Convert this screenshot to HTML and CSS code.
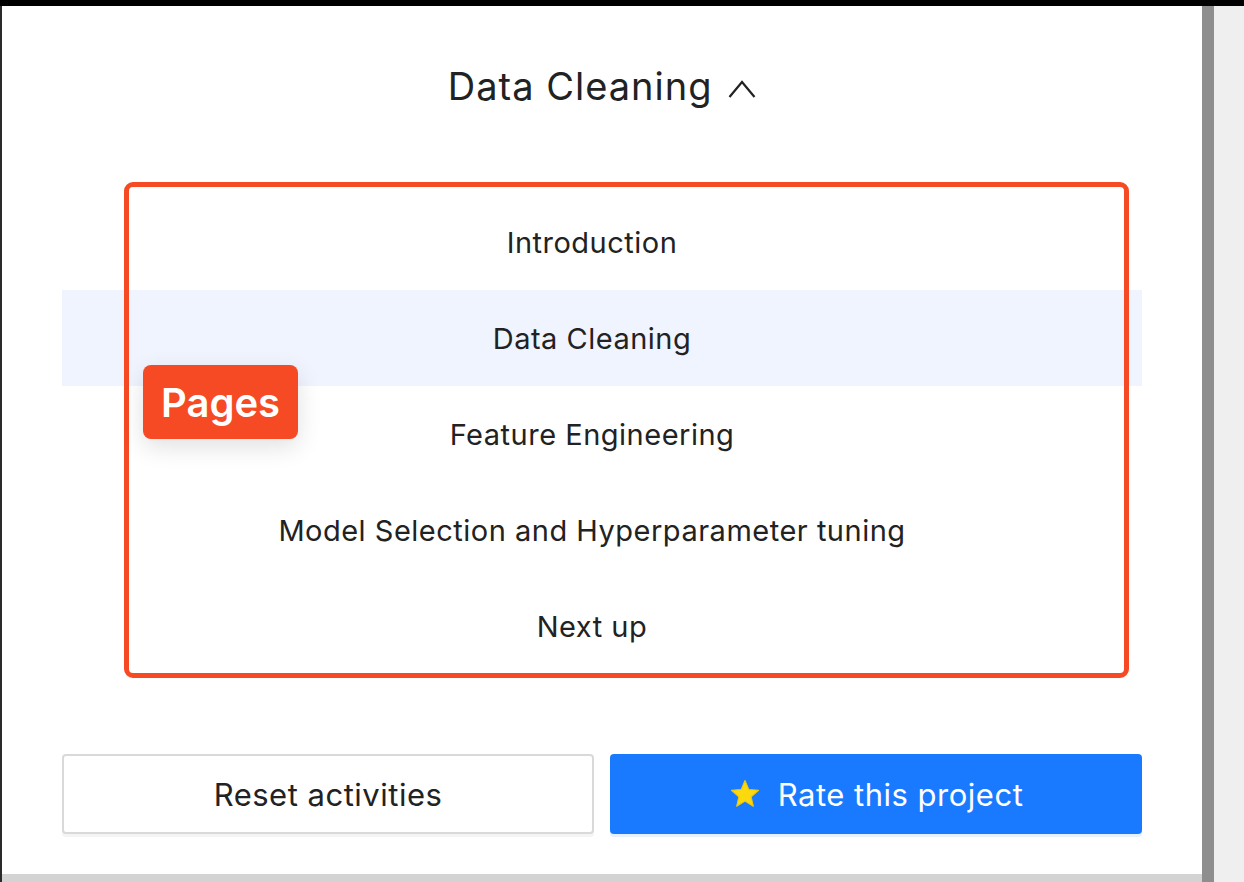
FILE: index.html
```html
<!DOCTYPE html>
<html>
<head>
<meta charset="utf-8">
<link rel="stylesheet" href="styles.css">
</head>
<body>
<div class="topbar"></div>
<div class="frame">
  <div class="panel">
    <div class="content">
      <h1 class="title">Data Cleaning
        <svg class="chev" width="28" height="20" viewBox="0 0 28 20"><path d="M1.5 18 L14 3 L26.5 18" fill="none" stroke="#222" stroke-width="2.2"/></svg>
      </h1>
      <div class="list-wrap">
        <ul class="pages">
          <li>Introduction</li>
          <li class="active">Data Cleaning</li>
          <li>Feature Engineering</li>
          <li>Model Selection and Hyperparameter tuning</li>
          <li>Next up</li>
        </ul>
        <div class="highlight-box"></div>
        <div class="badge">Pages</div>
      </div>
      <div class="actions">
        <button class="btn btn-ghost">Reset activities</button>
        <button class="btn btn-primary">
          <svg class="star" width="32" height="30" viewBox="0 0 24 23"><path d="M12 1.2 L14.9 8.1 L22.4 8.7 L16.7 13.6 L18.4 20.9 L12 17 L5.6 20.9 L7.3 13.6 L1.6 8.7 L9.1 8.1 Z" fill="#fbd90f" stroke="#f3c800" stroke-width="0.8" stroke-linejoin="round"/></svg>
          <span>Rate this project</span>
        </button>
      </div>
    </div>
    <div class="hscroll"></div>
  </div>
  <div class="vscroll"></div>
</div>
</body>
</html>
```

FILE: styles.css
```css
* { box-sizing: border-box; }
html, body { margin: 0; padding: 0; }
body {
  background: #efefef;
  font-family: Inter, "Noto Sans", "Liberation Sans", sans-serif;
  color: #222;
  width: 1244px;
  height: 882px;
  overflow: hidden;
}
.topbar { height: 6px; background: #000; }
.frame { display: flex; height: 876px; }
.panel {
  width: 1202px;
  background: #fff;
  border-left: 2px solid #2a2a2a;
  display: flex;
  flex-direction: column;
}
.content {
  flex: 1;
  padding: 58px 60px 0 60px;
}
.vscroll { width: 12px; background: #8e8e8e; }
.hscroll { height: 8px; background: #d3d3d3; }
.title {
  margin: 0 0 86px 0;
  height: 44px;
  line-height: 44px;
  font-size: 38px;
  letter-spacing: 1px;
  font-weight: 400;
  text-align: center;
  color: #222;
}
.chev { vertical-align: 1px; margin-left: 4px; }
.list-wrap { position: relative; }
.pages { list-style: none; margin: 0; padding: 0; }
.pages li {
  height: 96px;
  display: flex;
  align-items: center;
  justify-content: center;
  padding-right: 20px;
  font-size: 29px;
  letter-spacing: 0.5px;
  color: #222;
}
.pages li.active { background: #eff4fe; }
.highlight-box {
  position: absolute;
  left: 62px;
  top: -12px;
  width: 1005px;
  height: 496px;
  border: 5px solid #f54a24;
  border-radius: 9px;
}
.badge {
  position: absolute;
  left: 81px;
  top: 171px;
  width: 155px;
  height: 74px;
  background: #f54a24;
  color: #fff;
  border-radius: 8px;
  font-size: 40px;
  font-weight: 600;
  display: flex;
  align-items: center;
  justify-content: center;
  box-shadow: 0 8px 24px rgba(0,0,0,0.12);
}
.actions {
  margin-top: 80px;
  display: grid;
  grid-template-columns: 1fr 1fr;
  gap: 16px;
}
.btn {
  height: 80px;
  padding: 0;
  border-radius: 4px;
  font-family: inherit;
  font-size: 31px;
  letter-spacing: 0.5px;
  display: flex;
  align-items: center;
  justify-content: center;
  gap: 17px;
}
.btn-ghost {
  background: #fff;
  border: 2px solid #d9d9d9;
  color: #222;
  box-shadow: 0 3px 0 #f4f4f4;
}
.btn-primary {
  background: #1a7aff;
  border: none;
  color: #fff;
  box-shadow: 0 3px 0 #e6f1ff;
}
.star { display: block; }
```
